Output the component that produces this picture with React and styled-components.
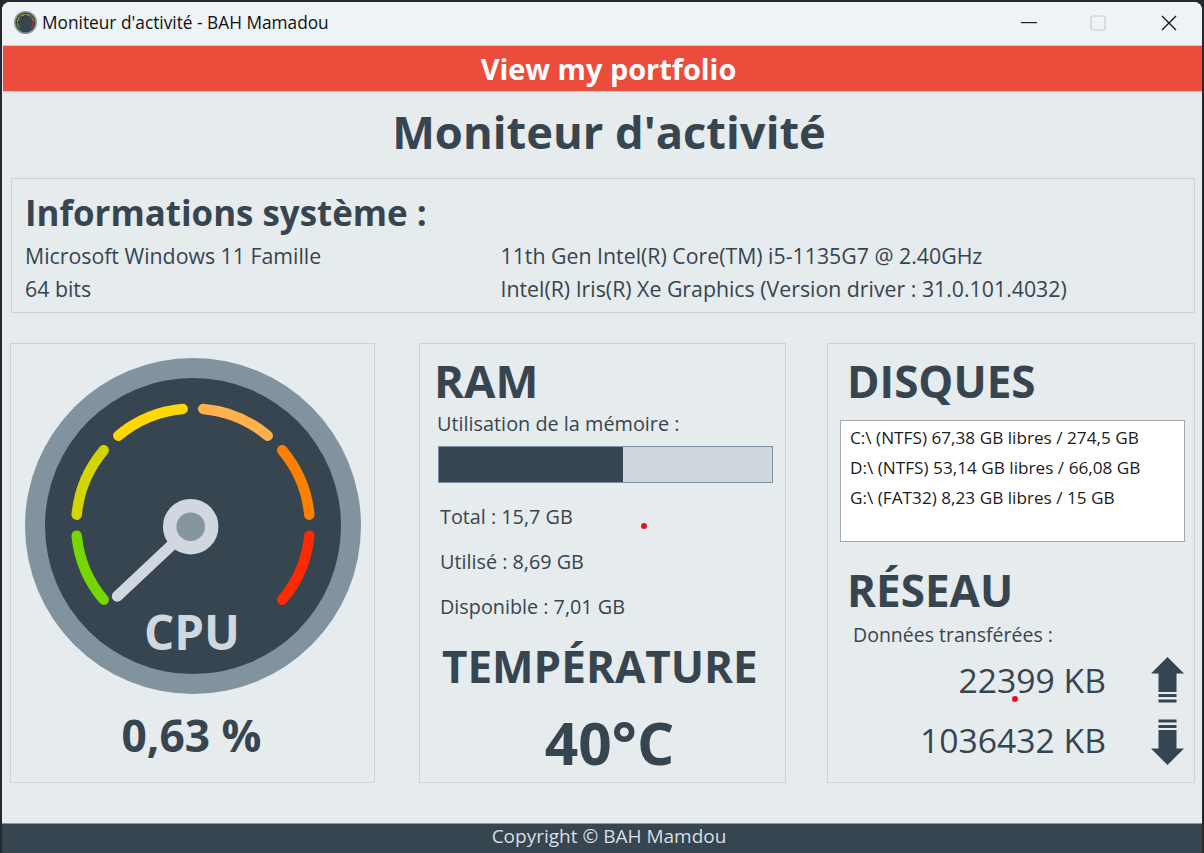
import React from "react";
import styled, { createGlobalStyle } from "styled-components";

const font = `"Open Sans", "Noto Sans", sans-serif`;
const dark = "#36454f";

const Global = createGlobalStyle`
  html, body { margin: 0; padding: 0; background: #25292c; }
  body { width: 1204px; height: 853px; overflow: hidden; font-family: ${font}; }
`;

const Frame = styled.div`
  width: 1204px;
  height: 853px;
  padding: 2px 2px 0;
  box-sizing: border-box;
`;
const Win = styled.div`
  position: relative;
  height: 851px;
  background: #e6ebee;
  border-radius: 8px 8px 0 0;
  overflow: hidden;
  display: flex;
  flex-direction: column;
`;
const TitleBar = styled.header`
  height: 43px;
  flex: none;
  background: #eef3f6;
  display: flex;
  align-items: center;
  padding: 0 0 2px 12px;
  box-sizing: border-box;
  gap: 5px;
`;
const WinTitle = styled.span`
  font-size: 17.3px;
  color: #111;
  flex: 1;
`;
const WinButton = styled.div`
  width: ${(p) => p.$w}px;
  height: 41px;
  display: flex;
  align-items: center;
  justify-content: center;
`;
const WinButtons = styled.div`
  display: flex;
  flex: none;
`;
const Banner = styled.a`
  flex: none;
  height: 45px;
  margin: 0 0 0 1px;
  background: #ec4c3b;
  border-top: 1px solid #c9cdd0;
  border-bottom: 1px solid #c9cdd0;
  color: #fff;
  font-size: 28.9px;
  font-weight: 700;
  display: flex;
  align-items: center;
  justify-content: center;
  padding-left: 12px;
`;
const Heading = styled.h1`
  margin: 0;
  height: 86px;
  flex: none;
  display: flex;
  align-items: center;
  justify-content: center;
  color: ${dark};
  font-size: 45.3px;
  font-weight: 700;
  padding: 0 0 8px 14px;
  box-sizing: border-box;
`;
const InfoPanel = styled.section`
  flex: none;
  width: 1184px;
  height: 135px;
  margin-left: 9px;
  box-sizing: border-box;
  border: 1px solid #ccd3d8;
  padding: 9px 13px;
  color: ${dark};
`;
const InfoTitle = styled.h2`
  margin: 0 0 1px;
  font-size: 34.9px;
  line-height: 50px;
  font-weight: 700;
`;
const InfoGrid = styled.div`
  display: grid;
  grid-template-columns: 475.5px 1fr;
  font-size: 21.3px;
  line-height: 33px;
`;
const Columns = styled.main`
  flex: none;
  margin: 30px 0 0 8px;
  display: grid;
  grid-template-columns: 409px 408px 368px;
`;
const Panel = styled.section`
  width: ${(p) => p.$w}px;
  height: 440px;
  box-sizing: border-box;
  border: 1px solid #ccd3d8;
  color: ${dark};
  display: flex;
  flex-direction: column;
`;
const GaugeWrap = styled.div`
  margin: 14px 0 0 14px;
  width: 336px;
  height: 336px;
  svg { display: block; }
`;
const CpuValue = styled.div`
  text-align: center;
  font-size: 44.3px;
  font-weight: 700;
  line-height: 60px;
  margin-top: 11px;
  padding-right: 2px;
`;
const RamBody = styled.div`
  padding: 7px 0 0 14px;
  display: flex;
  flex-direction: column;
`;
const SectionTitle = styled.h2`
  margin: 0;
  font-size: ${(p) => p.$size || 44}px;
  line-height: 58px;
  font-weight: 700;
`;
const Sub = styled.div`
  font-size: 19.85px;
  line-height: 26px;
  margin: 2px 0 0 3px;
`;
const Bar = styled.div`
  width: 335px;
  height: 37px;
  margin: 9px 0 0 4px;
  box-sizing: border-box;
  border: 1px solid #7d8fa1;
  background: #d0d8df;
`;
const BarFill = styled.div`
  height: 100%;
  background: ${dark};
`;
const Stat = styled.div`
  font-size: 19.8px;
  line-height: 45px;
  margin-left: 6px;
`;
const Stats = styled.div`
  margin-top: 11px;
  display: flex;
  flex-direction: column;
`;
const TempTitle = styled(SectionTitle)`
  margin: 8px 0 0 8px;
`;
const TempValue = styled.div`
  text-align: center;
  font-size: 58.6px;
  font-weight: 700;
  line-height: 80px;
  margin-top: 7px;
`;
const RightBody = styled.div`
  padding: 8px 0 0 12px;
  display: flex;
  flex-direction: column;
`;
const RightTitle = styled(SectionTitle)`
  margin-left: 7px;
`;
const DiskList = styled.div`
  width: 345px;
  height: 122px;
  box-sizing: border-box;
  margin-top: 10px;
  border: 1px solid #a5a8ab;
  background: #fff;
  padding: 2px 9px;
  color: #1c1c1c;
  font-size: 17.2px;
  line-height: 30px;
`;
const NetTitle = styled(RightTitle)`
  margin-top: 19px;
`;
const NetSub = styled(Sub)`
  margin: 4px 0 3px 13px;
  font-size: 19.5px;
  line-height: 24px;
`;
const NetRow = styled.div`
  display: flex;
  align-items: center;
  justify-content: flex-end;
  height: 60px;
`;
const NetVal = styled.span`
  font-size: 33.7px;
  margin-right: 45px;
`;
const NetIcon = styled.svg`
  display: block;
  flex: none;
  margin: ${(p) => p.$top || 0}px 10px 0 0;
`;
const Dot = styled.span`
  position: absolute;
  left: ${(p) => p.$x}px;
  top: ${(p) => p.$y}px;
  width: 6px;
  height: 6px;
  border-radius: 50%;
  background: #e8101a;
`;
const Footer = styled.footer`
  margin-top: auto;
  height: 30px;
  flex: none;
  background: ${dark};
  border-top: 1px solid #8c979e;
  box-sizing: border-box;
  color: #d9dfe3;
  font-size: 19px;
  display: flex;
  align-items: center;
  justify-content: center;
  padding: 0 0 6px 14px;
`;

const segs = [
  ["M51.7 177.7A116.7 116.7 0 0 0 78.7 241.7", "#76d600"],
  ["M51.7 156.7A116.7 116.7 0 0 1 78.7 92.3", "#d4d400"],
  ["M93.3 77.7A116.7 116.7 0 0 1 157.7 51", "#ffd800"],
  ["M178.3 51A116.7 116.7 0 0 1 242.7 77.7", "#ffb14e"],
  ["M257.3 92.3A116.7 116.7 0 0 1 284.3 156.7", "#ff8000"],
  ["M284.3 177.7A116.7 116.7 0 0 1 257.3 241.7", "#ff2a00"],
];

const Gauge = () => (
  <svg width="336" height="336" viewBox="0 0 336 336">
    <circle cx="168" cy="168" r="168" fill="#81939f" />
    <circle cx="168" cy="168" r="148" fill={dark} />
    {segs.map(([d, c]) => (
      <path key={c} d={d} fill="none" stroke={c} strokeWidth="10.5" strokeLinecap="round" />
    ))}
    <path d="M150 184L92.3 238.3" stroke="#d0d7de" strokeWidth="11" strokeLinecap="round" />
    <circle cx="165.7" cy="168.7" r="21" fill="#85969f" stroke="#d0d7de" strokeWidth="13.5" />
    <text x="167" y="292" textAnchor="middle" fontFamily={font} fontSize="47.5" fontWeight="700" fill="#d0d7de">CPU</text>
  </svg>
);

const ArrowUp = () => (
  <NetIcon $top={0} width="33" height="46" viewBox="0 0 33 46">
    <path d="M16.5 0L33 16.5H25.5V35H7.5V16.5H0Z" fill={dark} />
    <rect x="7.5" y="37" width="18" height="3" fill={dark} />
    <rect x="7.5" y="42.5" width="18" height="3" fill={dark} />
  </NetIcon>
);
const ArrowDown = () => (
  <NetIcon $top={4} width="33" height="46" viewBox="0 0 33 46">
    <rect x="7.5" y="0.5" width="18" height="3" fill={dark} />
    <rect x="7.5" y="6" width="18" height="3" fill={dark} />
    <path d="M7.5 11H25.5V29.5H33L16.5 46L0 29.5H7.5Z" fill={dark} />
  </NetIcon>
);
const AppIcon = () => (
  <svg width="23" height="23" viewBox="0 0 336 336">
    <circle cx="168" cy="168" r="168" fill="#81939f" />
    <circle cx="168" cy="168" r="145" fill={dark} />
    {segs.map(([d, c]) => (
      <path key={c} d={d} fill="none" stroke={c} strokeWidth="14" />
    ))}
  </svg>
);

export default function App() {
  return (
    <Frame>
      <Global />
      <Win>
        <TitleBar>
          <AppIcon />
          <WinTitle>Moniteur d'activité - BAH Mamadou</WinTitle>
          <WinButtons>
            <WinButton $w={63}>
              <svg width="16" height="2" viewBox="0 0 16 2"><rect width="16" height="1.2" fill="#222" /></svg>
            </WinButton>
            <WinButton $w={75}>
              <svg width="16" height="16" viewBox="0 0 16 16"><rect x="1" y="1" width="14" height="14" rx="2" fill="none" stroke="#c8cdd0" strokeWidth="1.2" /></svg>
            </WinButton>
            <WinButton $w={67}>
              <svg width="16" height="16" viewBox="0 0 16 16"><path d="M1 1L15 15M15 1L1 15" stroke="#111" strokeWidth="1.3" /></svg>
            </WinButton>
          </WinButtons>
        </TitleBar>
        <Banner>View my portfolio</Banner>
        <Heading>Moniteur d'activité</Heading>
        <InfoPanel>
          <InfoTitle>Informations système :</InfoTitle>
          <InfoGrid>
            <span>Microsoft Windows 11 Famille</span>
            <span>11th Gen Intel(R) Core(TM) i5-1135G7 @ 2.40GHz</span>
            <span>64 bits</span>
            <span>Intel(R) Iris(R) Xe Graphics (Version driver : 31.0.101.4032)</span>
          </InfoGrid>
        </InfoPanel>
        <Columns>
          <Panel $w={365}>
            <GaugeWrap><Gauge /></GaugeWrap>
            <CpuValue>0,63 %</CpuValue>
          </Panel>
          <Panel $w={367}>
            <RamBody>
              <SectionTitle $size={45.5}>RAM</SectionTitle>
              <Sub>Utilisation de la mémoire :</Sub>
              <Bar><BarFill style={{ width: `${(8.69 / 15.7) * 100}%` }} /></Bar>
              <Stats>
                <Stat>Total : 15,7 GB</Stat>
                <Stat>Utilisé : 8,69 GB</Stat>
                <Stat>Disponible : 7,01 GB</Stat>
              </Stats>
              <TempTitle>TEMPÉRATURE</TempTitle>
              <TempValue>40°C</TempValue>
            </RamBody>
          </Panel>
          <Panel $w={368}>
            <RightBody>
              <RightTitle>DISQUES</RightTitle>
              <DiskList>
                <div>C:\ (NTFS) 67,38 GB libres / 274,5 GB</div>
                <div>D:\ (NTFS) 53,14 GB libres / 66,08 GB</div>
                <div>G:\ (FAT32) 8,23 GB libres / 15 GB</div>
              </DiskList>
              <NetTitle>RÉSEAU</NetTitle>
              <NetSub>Données transférées :</NetSub>
              <NetRow><NetVal>22399 KB</NetVal><ArrowUp /></NetRow>
              <NetRow><NetVal>1036432 KB</NetVal><ArrowDown /></NetRow>
            </RightBody>
          </Panel>
        </Columns>
        <Dot $x={639} $y={521} />
        <Dot $x={1010} $y={694} />
        <Footer>Copyright © BAH Mamdou</Footer>
      </Win>
    </Frame>
  );
}
